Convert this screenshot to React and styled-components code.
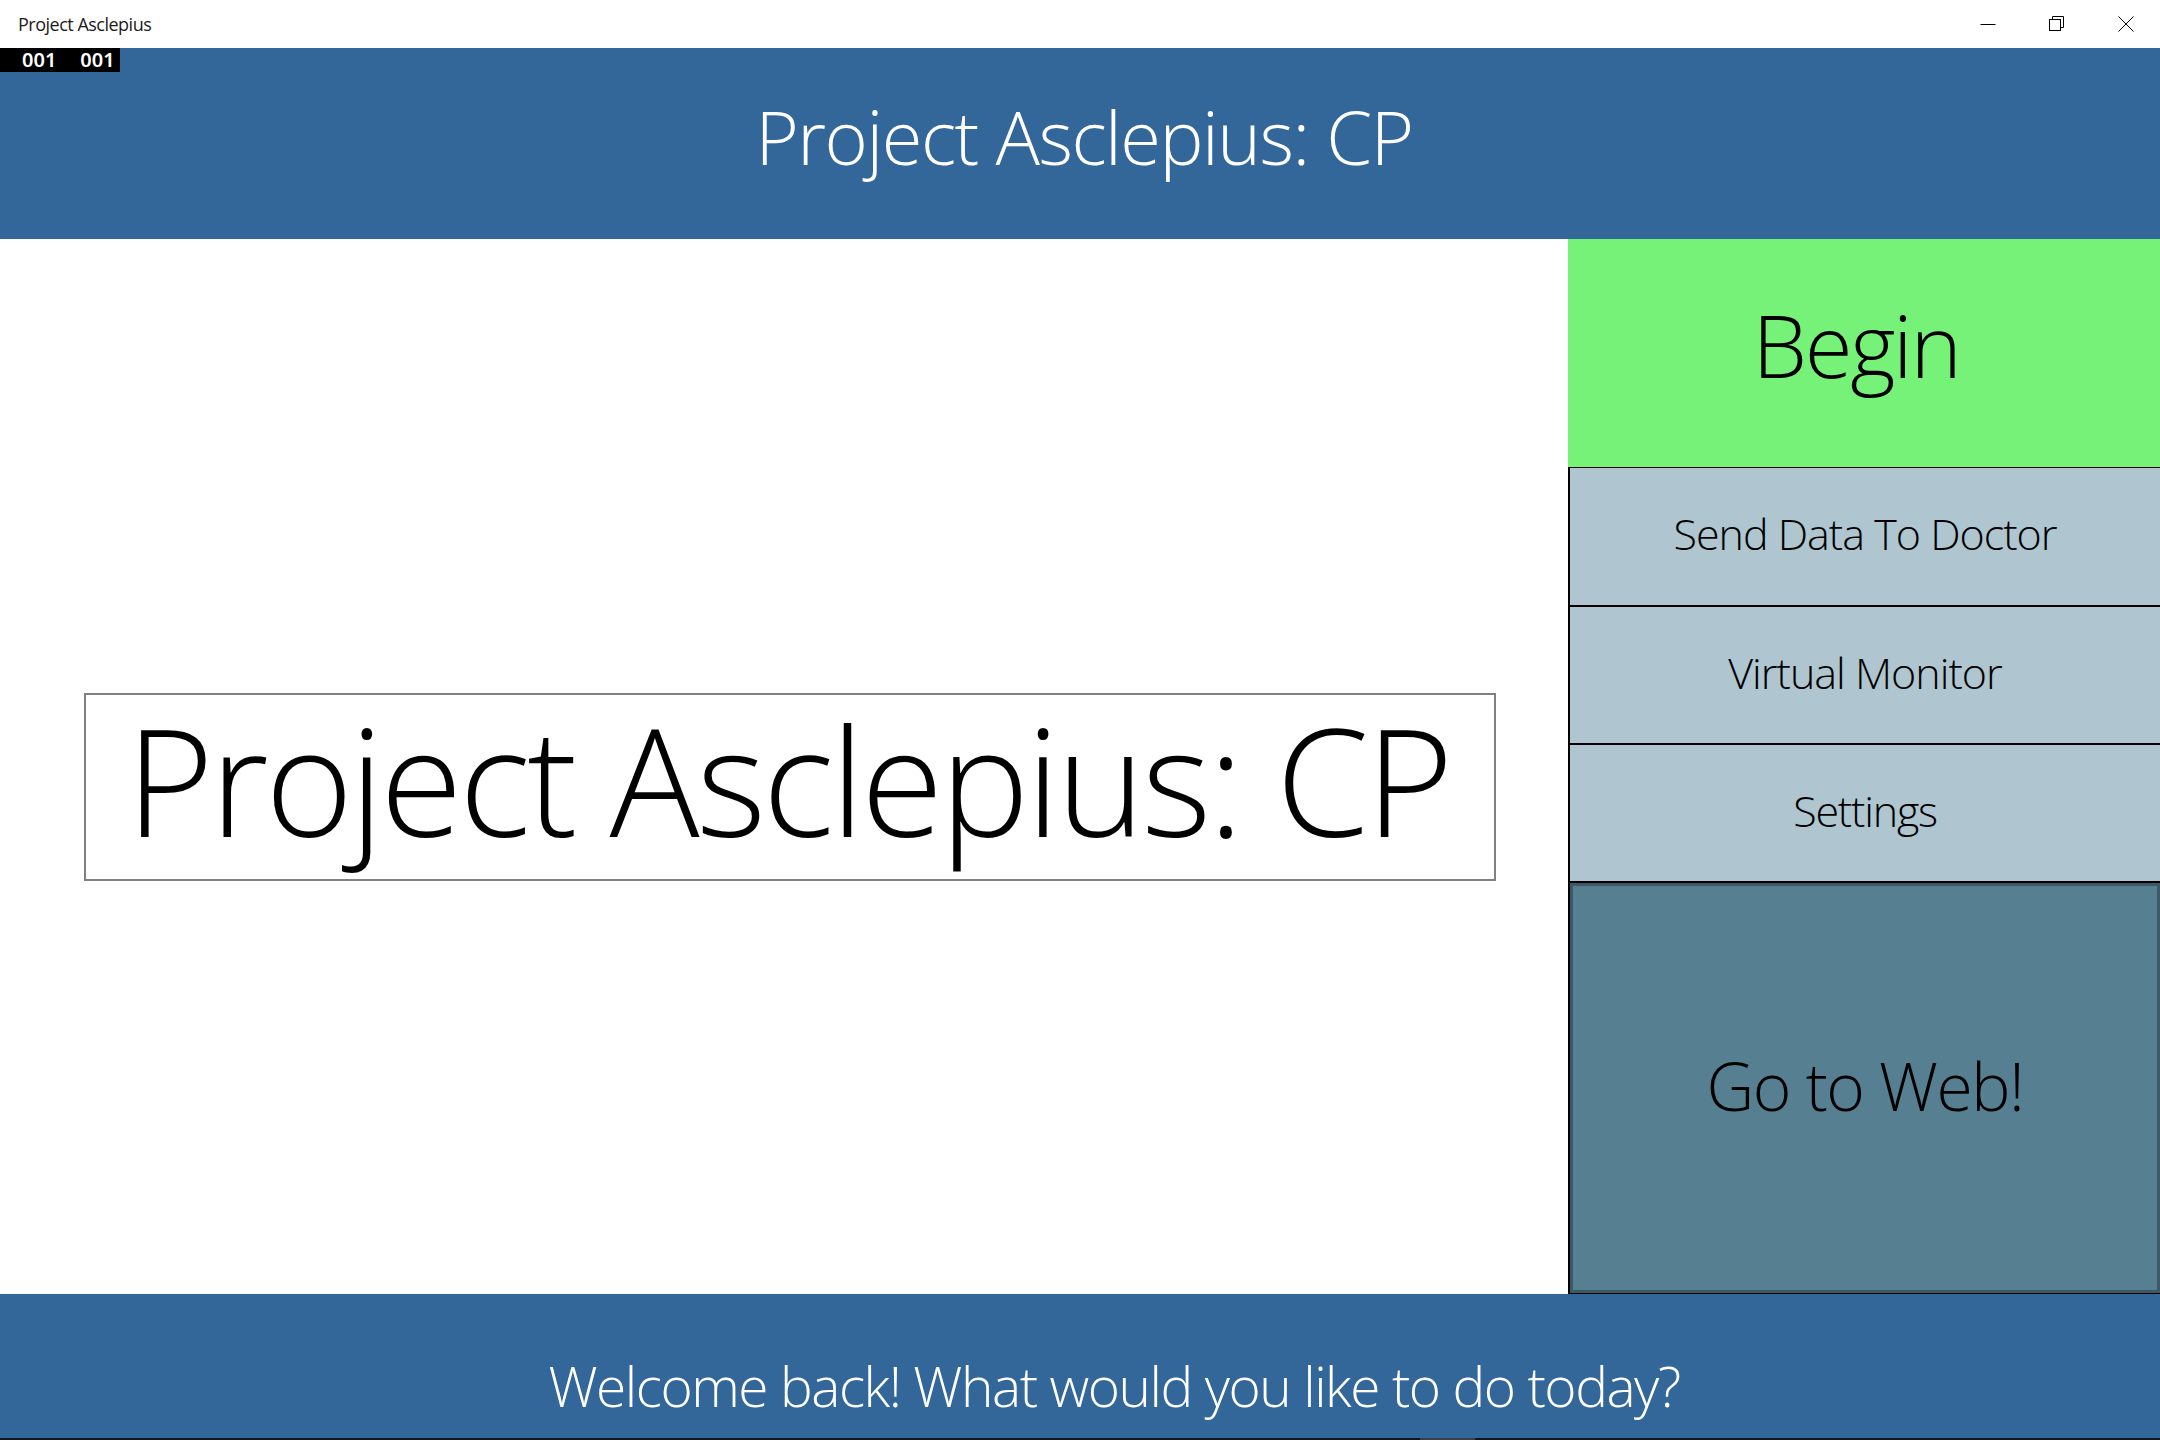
import React from "react";
import styled, { createGlobalStyle } from "styled-components";

const GlobalStyle = createGlobalStyle`
  html, body {
    margin: 0;
    padding: 0;
    background: #ffffff;
  }
  body {
    font-family: "Open Sans", "Noto Sans", "Liberation Sans", sans-serif;
  }
`;

const Page = styled.div`
  width: 2160px;
  height: 1440px;
  display: flex;
  flex-direction: column;
  overflow: hidden;
`;

const TitleBar = styled.div`
  height: 48px;
  flex: none;
  display: flex;
  align-items: center;
  background: #ffffff;
  padding-left: 18px;
`;

const WindowTitle = styled.span`
  font-size: 18px;
  color: #1b1b1b;
  letter-spacing: -0.5px;
`;

const Controls = styled.div`
  margin-left: auto;
  display: flex;
  height: 100%;
`;

const ControlButton = styled.div`
  width: 69px;
  height: 100%;
  display: flex;
  align-items: center;
  justify-content: center;
`;

const Header = styled.header`
  position: relative;
  height: 191px;
  flex: none;
  background: #336699;
  display: flex;
  align-items: center;
  justify-content: center;
  padding: 0 0 14px 8px;
  box-sizing: border-box;
`;

const HeaderTitle = styled.h1`
  margin: 0;
  font-weight: 300;
  font-size: 74px;
  line-height: 1;
  color: #ffffff;
  letter-spacing: -1.5px;
`;

const Counter = styled.div`
  position: absolute;
  left: 0;
  top: 0;
  width: 120px;
  height: 24px;
  background: #000000;
  display: flex;
  align-items: center;
  gap: 24px;
  padding-left: 22px;
  box-sizing: border-box;
  color: #ffffff;
  font-family: "Noto Sans", "DejaVu Sans", sans-serif;
  font-size: 20px;
  font-weight: 600;
  line-height: 1;
`;

const Body = styled.div`
  flex: none;
  height: 1055px;
  display: flex;
`;

const Main = styled.main`
  flex: 1;
  display: flex;
  align-items: center;
  justify-content: center;
  padding: 40px 0 0 12px;
  box-sizing: border-box;
`;

const NameBox = styled.div`
  width: 1412px;
  height: 188px;
  box-sizing: border-box;
  border: 2px solid #808080;
  display: flex;
  align-items: center;
  justify-content: center;
  padding-bottom: 16px;
  padding-right: 4px;
`;

const BigName = styled.div`
  font-weight: 300;
  font-size: 150px;
  line-height: 1;
  color: #000000;
  letter-spacing: -3.4px;
  white-space: nowrap;
`;

const Side = styled.aside`
  width: 592px;
  flex: none;
  display: flex;
  flex-direction: column;
`;

const MenuButton = styled.div`
  flex: none;
  height: ${(p) => p.h}px;
  box-sizing: border-box;
  background: ${(p) => p.bg};
  border-left: ${(p) => (p.edge ? "2px solid #000" : "none")};
  border-top: ${(p) => (p.line ? `${p.line}px solid #000` : "none")};
  display: flex;
  align-items: center;
  justify-content: center;
  padding-bottom: ${(p) => p.lift || 0}px;
  padding-right: ${(p) => p.nudge || 0}px;
  font-weight: 300;
  font-size: ${(p) => p.size}px;
  line-height: 1;
  color: #000;
  letter-spacing: ${(p) => p.track || 0}px;
  white-space: nowrap;
`;

const WebButton = styled.div`
  flex: 1;
  box-sizing: border-box;
  border-left: 2px solid #000;
  border-top: 2px solid #000;
  border-bottom: 1px solid #000;
  display: flex;
`;

const WebInner = styled.div`
  flex: 1;
  border: 3px solid #3b5967;
  background: #567f91;
  display: flex;
  align-items: center;
  justify-content: center;
  padding-bottom: 6px;
  font-weight: 300;
  font-size: 66px;
  line-height: 1;
  color: #000;
  letter-spacing: -1.5px;
`;

const Footer = styled.footer`
  flex: 1;
  background: #336699;
  display: flex;
  flex-direction: column;
`;

const FooterText = styled.div`
  flex: 1;
  display: flex;
  align-items: center;
  justify-content: center;
  padding: 38px 0 0 68px;
  font-weight: 300;
  font-size: 55px;
  line-height: 1;
  color: #ffffff;
  letter-spacing: -1.45px;
`;

const TaskEdge = styled.div`
  height: 2px;
  background: #0f1720;
  display: flex;
`;

const EdgeMark = styled.div`
  margin-left: 1420px;
  width: 55px;
  background: #3a3f48;
`;

function Minimize() {
  return (
    <svg width="16" height="16" viewBox="0 0 16 16">
      <path d="M0.5 8.5 H15.5" stroke="#000" strokeWidth="1" />
    </svg>
  );
}

function Restore() {
  return (
    <svg width="16" height="16" viewBox="0 0 16 16">
      <rect x="0.5" y="3.5" width="11" height="11" fill="none" stroke="#000" />
      <path d="M3.5 3.5 V0.5 H14.5 V11.5 H11.5" fill="none" stroke="#000" />
    </svg>
  );
}

function Close() {
  return (
    <svg width="16" height="16" viewBox="0 0 16 16">
      <path d="M0.5 0.5 L15.5 15.5 M15.5 0.5 L0.5 15.5" stroke="#000" strokeWidth="1" />
    </svg>
  );
}

export default function App() {
  return (
    <Page>
      <GlobalStyle />
      <TitleBar>
        <WindowTitle>Project Asclepius</WindowTitle>
        <Controls>
          <ControlButton><Minimize /></ControlButton>
          <ControlButton><Restore /></ControlButton>
          <ControlButton><Close /></ControlButton>
        </Controls>
      </TitleBar>
      <Header>
        <Counter>
          <span>001</span>
          <span>001</span>
        </Counter>
        <HeaderTitle>Project Asclepius: CP</HeaderTitle>
      </Header>
      <Body>
        <Main>
          <NameBox>
            <BigName>Project Asclepius: CP</BigName>
          </NameBox>
        </Main>
        <Side>
          <MenuButton h={228} bg="#76f279" size={87} lift={18} nudge={16} track={-2.3}>
            Begin
          </MenuButton>
          <MenuButton h={138} bg="#afc6d0" edge line={1} size={43} lift={6} track={-1}>
            Send Data To Doctor
          </MenuButton>
          <MenuButton h={138} bg="#afc6d0" edge line={2} size={43} lift={6} track={-1}>
            Virtual Monitor
          </MenuButton>
          <MenuButton h={138} bg="#afc6d0" edge line={2} size={43} lift={6} track={-1.2}>
            Settings
          </MenuButton>
          <WebButton>
            <WebInner>Go to Web!</WebInner>
          </WebButton>
        </Side>
      </Body>
      <Footer>
        <FooterText>Welcome back! What would you like to do today?</FooterText>
        <TaskEdge>
          <EdgeMark />
        </TaskEdge>
      </Footer>
    </Page>
  );
}
